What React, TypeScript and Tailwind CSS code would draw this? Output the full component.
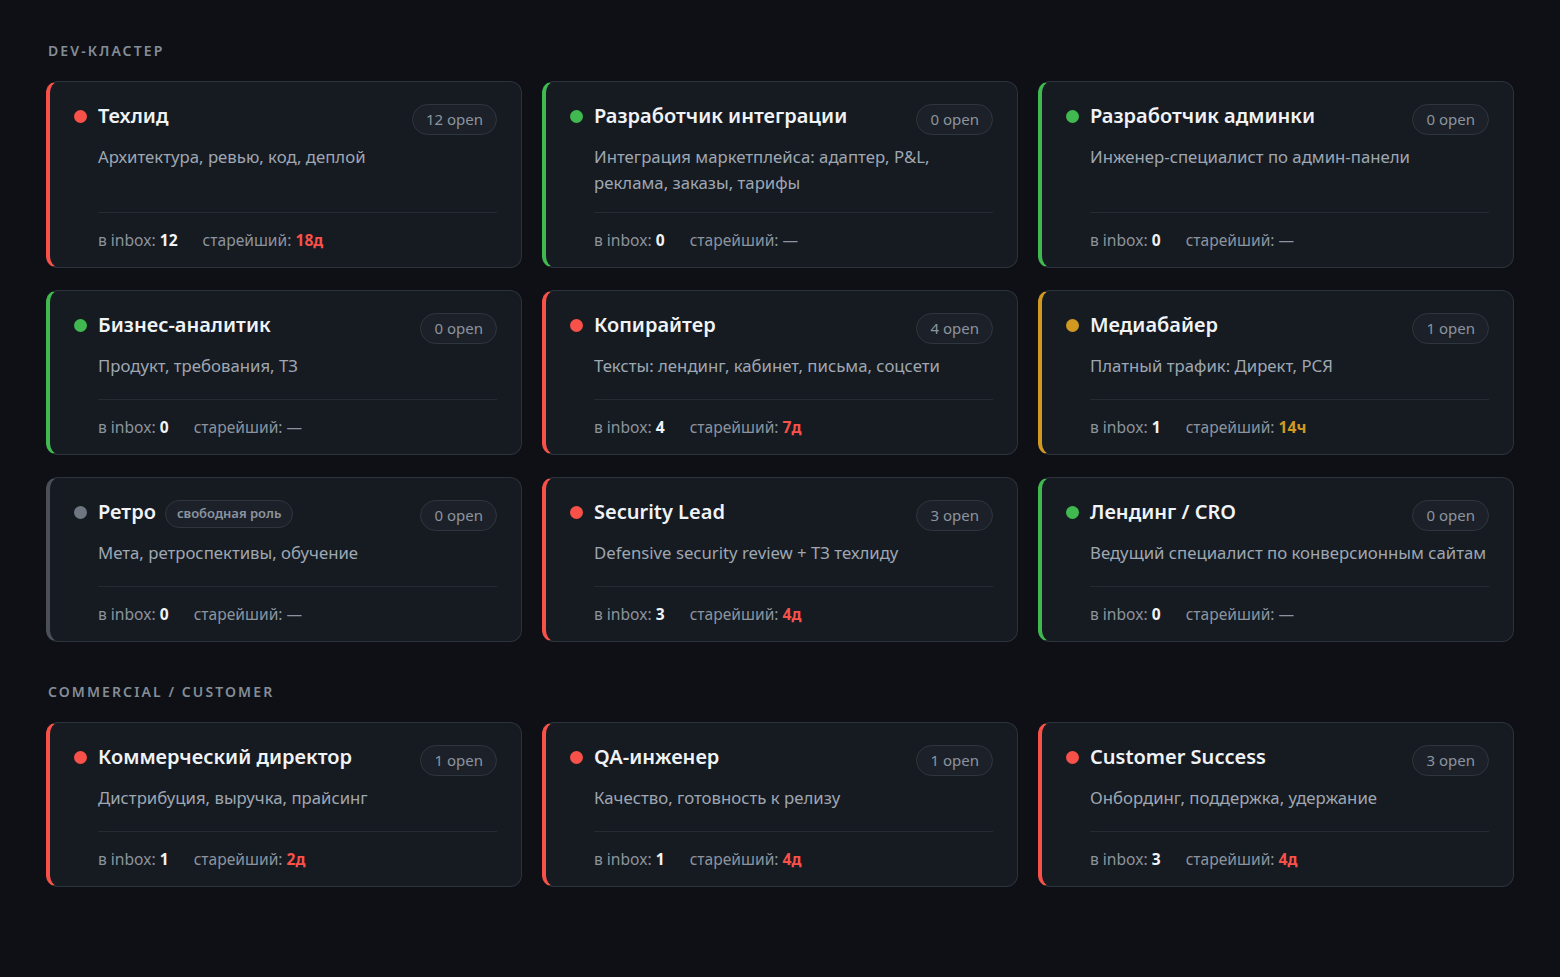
import React from 'react';

type Tone = 'red' | 'green' | 'amber' | 'gray';

interface Role {
  title: string;
  desc: string;
  tone: Tone;
  open: number;
  inbox: number;
  oldest?: string;
  tag?: string;
}

const toneBorder: Record<Tone, string> = {
  red: 'border-l-[#f85149]',
  green: 'border-l-[#3fb950]',
  amber: 'border-l-[#d29922]',
  gray: 'border-l-[#4b5058]',
};

const toneDot: Record<Tone, string> = {
  red: 'bg-[#f85149]',
  green: 'bg-[#3fb950]',
  amber: 'bg-[#d29922]',
  gray: 'bg-[#6e7681]',
};

const toneText: Record<Tone, string> = {
  red: 'text-[#f85149]',
  green: 'text-[#3fb950]',
  amber: 'text-[#d29922]',
  gray: 'text-[#8b949e]',
};

const devCluster: Role[] = [
  { title: 'Техлид', desc: 'Архитектура, ревью, код, деплой', tone: 'red', open: 12, inbox: 12, oldest: '18д' },
  {
    title: 'Разработчик интеграции',
    desc: 'Интеграция маркетплейса: адаптер, P&L, реклама, заказы, тарифы',
    tone: 'green',
    open: 0,
    inbox: 0,
  },
  { title: 'Разработчик админки', desc: 'Инженер-специалист по админ-панели', tone: 'green', open: 0, inbox: 0 },
  { title: 'Бизнес-аналитик', desc: 'Продукт, требования, ТЗ', tone: 'green', open: 0, inbox: 0 },
  { title: 'Копирайтер', desc: 'Тексты: лендинг, кабинет, письма, соцсети', tone: 'red', open: 4, inbox: 4, oldest: '7д' },
  { title: 'Медиабайер', desc: 'Платный трафик: Директ, РСЯ', tone: 'amber', open: 1, inbox: 1, oldest: '14ч' },
  { title: 'Ретро', desc: 'Мета, ретроспективы, обучение', tone: 'gray', open: 0, inbox: 0, tag: 'свободная роль' },
  { title: 'Security Lead', desc: 'Defensive security review + ТЗ техлиду', tone: 'red', open: 3, inbox: 3, oldest: '4д' },
  { title: 'Лендинг / CRO', desc: 'Ведущий специалист по конверсионным сайтам', tone: 'green', open: 0, inbox: 0 },
];

const commercial: Role[] = [
  { title: 'Коммерческий директор', desc: 'Дистрибуция, выручка, прайсинг', tone: 'red', open: 1, inbox: 1, oldest: '2д' },
  { title: 'QA-инженер', desc: 'Качество, готовность к релизу', tone: 'red', open: 1, inbox: 1, oldest: '4д' },
  { title: 'Customer Success', desc: 'Онбординг, поддержка, удержание', tone: 'red', open: 3, inbox: 3, oldest: '4д' },
];

const RoleCard: React.FC<{ role: Role }> = ({ role }) => (
  <div
    className={`flex flex-col rounded-xl border border-[#2d333b] border-l-4 ${toneBorder[role.tone]} bg-[#161a21] pl-6 pr-6 pt-[22px] pb-[15px]`}
  >
    <div className="flex h-[31px] items-start justify-between gap-3">
      <div className="flex h-6 min-w-0 items-center">
        <span className={`h-[13px] w-[13px] shrink-0 rounded-full ${toneDot[role.tone]}`} />
        <span className="ml-[11px] whitespace-nowrap text-[20px] font-semibold leading-6 text-[#f0f3f6]">
          {role.title}
        </span>
        {role.tag && (
          <span className="ml-[9px] mt-[4px] flex h-7 items-center rounded-full border border-[#30363d] bg-[#1c2129] px-[11px] text-[13px] font-semibold text-[#8b949e]">
            {role.tag}
          </span>
        )}
      </div>
      <span className="flex h-[31px] shrink-0 items-center rounded-full border border-[#30363d] bg-[#1c2129] px-[13px] text-[15px] text-[#8b949e]">
        {role.open} open
      </span>
    </div>
    <p className="ml-6 mt-[9px] min-h-[30px] text-[16.75px] leading-[26px] text-[#9ea7b2]">{role.desc}</p>
    <div className="mt-auto pt-4">
      <div className="ml-6 border-t border-[#262b33] pt-[15px]">
        <div className="flex items-center gap-[25px] text-[15.6px] leading-6 text-[#8b949e]">
          <span>
            в inbox: <b className="font-bold text-[#f0f3f6]">{role.inbox}</b>
          </span>
          <span>
            старейший:{' '}
            {role.oldest ? (
              <b className={`font-bold ${toneText[role.tone]}`}>{role.oldest}</b>
            ) : (
              <span>—</span>
            )}
          </span>
        </div>
      </div>
    </div>
  </div>
);

const Section: React.FC<{ label: string; roles: Role[]; className?: string }> = ({ label, roles, className }) => (
  <section className={className}>
    <h2 className="mb-5 pl-[2px] text-[14px] font-semibold uppercase leading-5 tracking-[0.15em] text-[#848d97]">
      {label}
    </h2>
    <div className="grid grid-cols-3 gap-x-5 gap-y-[22px]">
      {roles.map((r) => (
        <RoleCard key={r.title} role={r} />
      ))}
    </div>
  </section>
);

export default function App() {
  return (
    <div
      className="min-h-screen bg-[#0e1015] px-[46px] pt-[41px] pb-16"
      style={{ fontFamily: '"Noto Sans", "Open Sans", "Liberation Sans", sans-serif' }}
    >
      <Section label="Dev-кластер" roles={devCluster} />
      <Section label="Commercial / Customer" roles={commercial} className="mt-10" />
    </div>
  );
}
